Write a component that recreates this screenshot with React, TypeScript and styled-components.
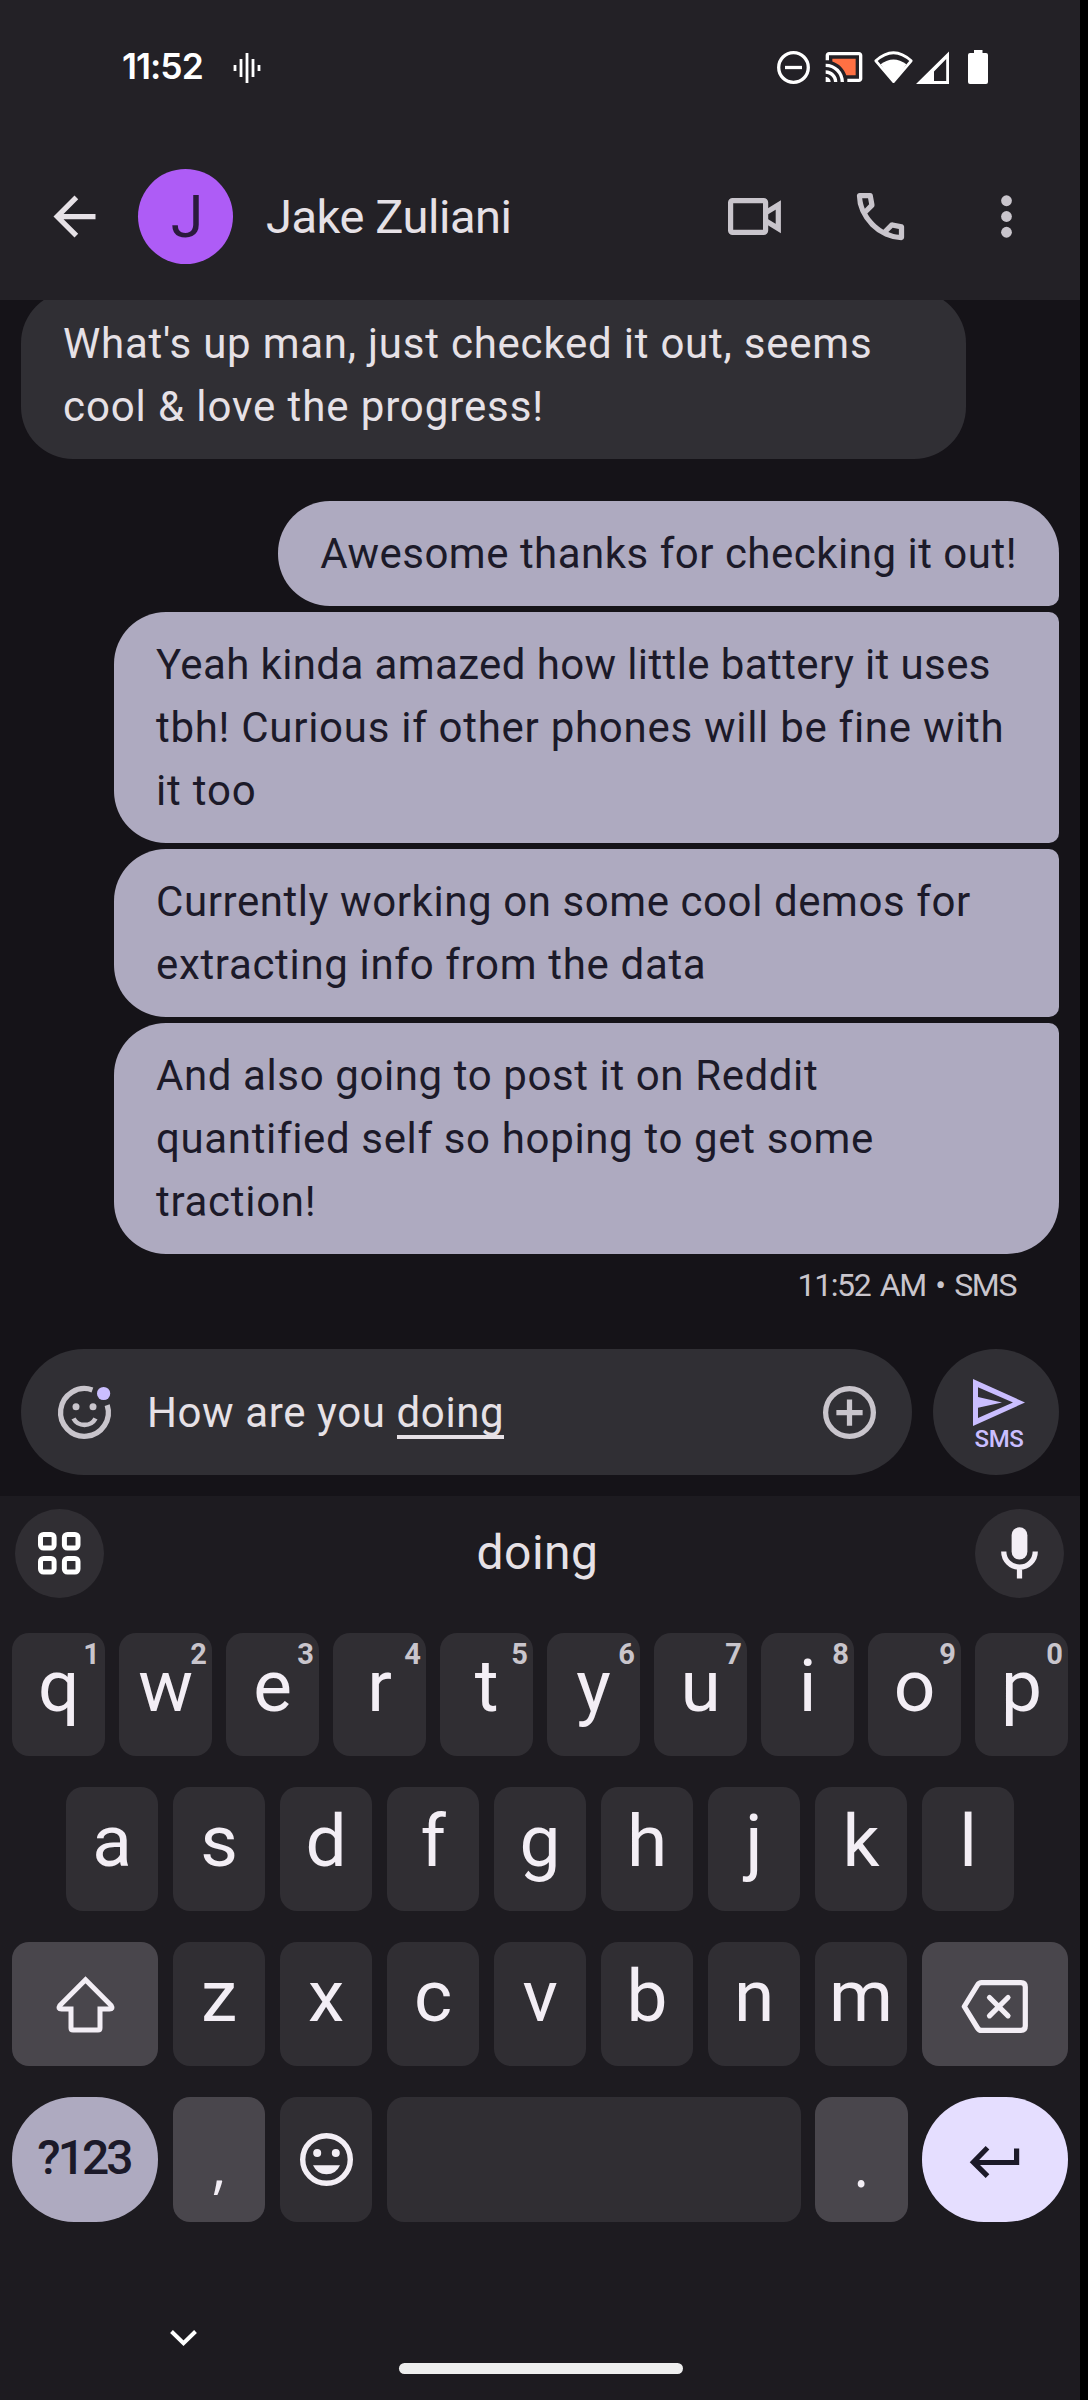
import React from "react";
import styled, { createGlobalStyle } from "styled-components";

const color = {
  header: "#232126",
  thread: "#151318",
  field: "#302f34",
  keyboard: "#1d1b20",
  key: "#302e33",
  actionKey: "#49464c",
  lavender: "#aeaac0",
  enter: "#e5deff",
  accent: "#cabeff",
  ink: "#1c1a29",
  text: "#e6e1e6",
  keyText: "#f3eef5",
  muted: "#c9c5cc",
  avatar: "#ae5cf6",
};

const GlobalStyle = createGlobalStyle`
  *, *::before, *::after { box-sizing: border-box; }
  body {
    margin: 0;
    background: #000;
    font-family: Roboto, "Liberation Sans", sans-serif;
  }
  svg { display: block; flex: none; overflow: visible; }
`;

const Phone = styled.main`
  width: 1080px;
  height: 2400px;
  display: flex;
  flex-direction: column;
  background: ${color.thread};
  overflow: hidden;
`;

/* ---------- header ---------- */

const Header = styled.header`
  height: 300px;
  flex: none;
  display: flex;
  flex-direction: column;
  background: ${color.header};
`;

const StatusBar = styled.div`
  height: 134px;
  display: flex;
  align-items: center;
  padding: 0 92px 0 122px;
  color: #fff;
`;

const Clock = styled.time`
  width: 111px;
  font: 600 35.5px/40px Inter, Roboto, sans-serif;
  letter-spacing: -1px;
`;

const StatusIcons = styled.div`
  margin-left: auto;
  display: flex;
  align-items: center;
`;

const AppBar = styled.div`
  height: 166px;
  display: flex;
  align-items: center;
  padding: 0 42px 1px 43px;
`;

const Avatar = styled.div`
  width: 95px;
  height: 95px;
  margin: 0 33px 0 32px;
  padding-left: 3px;
  border-radius: 50%;
  display: flex;
  align-items: center;
  justify-content: center;
  background: ${color.avatar};
  color: #2b1a3d;
  font-size: 59px;
  line-height: 95px;
`;

const ContactName = styled.h1`
  flex: 1;
  margin: 0;
  color: ${color.text};
  font-size: 47px;
  font-weight: 400;
  line-height: 64px;
  letter-spacing: -0.45px;
`;

const AppActions = styled.div`
  display: flex;
  align-items: center;
  gap: 63px;
  color: ${color.muted};
`;

/* ---------- thread ---------- */

const Thread = styled.section`
  height: 1049px;
  flex: none;
  display: flex;
  flex-direction: column;
  justify-content: flex-end;
  padding: 0 21px;
  overflow: hidden;
`;

const Bubble = styled.div<{ $from: "me" | "them"; $corner?: "first" | "middle" | "last" }>`
  flex: none;
  max-width: 945px;
  ${(p) => (p.$from === "them" ? "width: 945px;" : "")}
  ${(p) => (p.$corner === "middle" || p.$corner === "last" ? "width: 945px;" : "")}
  align-self: ${(p) => (p.$from === "me" ? "flex-end" : "flex-start")};
  margin-bottom: ${(p) => (p.$from === "them" ? 42 : p.$corner === "last" ? 0 : 6)}px;
  padding: 21px 42px;
  border-radius: ${(p) =>
    p.$from === "them"
      ? "52px"
      : p.$corner === "first"
      ? "52px 52px 10px 52px"
      : p.$corner === "middle"
      ? "52px 10px 10px 52px"
      : "52px 10px 52px 52px"};
  background: ${(p) => (p.$from === "me" ? color.lavender : color.field)};
  color: ${(p) => (p.$from === "me" ? color.ink : color.text)};
`;

const BubbleLine = styled.div<{ $tracking: number }>`
  font-size: 42px;
  line-height: 63px;
  white-space: nowrap;
  letter-spacing: ${(p) => p.$tracking}px;
`;

const Stamp = styled.div`
  height: 95px;
  flex: none;
  padding: 12px 43px 0 0;
  text-align: right;
  color: ${color.muted};
  font-size: 32px;
  line-height: 38px;
  letter-spacing: -1.4px;
  word-spacing: 3px;
`;

/* ---------- compose ---------- */

const Compose = styled.section`
  height: 147px;
  flex: none;
  display: flex;
  gap: 21px;
  padding: 0 21px 21px;
`;

const Field = styled.div`
  flex: 1;
  display: flex;
  align-items: center;
  padding: 0 31px 0 32px;
  border-radius: 63px;
  background: ${color.field};
  color: ${color.muted};
`;

const Draft = styled.div`
  flex: 1;
  padding-left: 31px;
  color: ${color.text};
  font-size: 42px;
  line-height: 63px;
  letter-spacing: 0.6px;
  white-space: pre;
`;

const Composing = styled.span`
  display: inline-block;
  height: 50px;
  line-height: 48px;
  border-bottom: 4px solid ${color.text};
`;

const SendButton = styled.button`
  width: 126px;
  height: 126px;
  border: 0;
  border-radius: 50%;
  padding: 30px 0 0 6px;
  display: flex;
  flex-direction: column;
  align-items: center;
  background: ${color.field};
  color: ${color.accent};
`;

const SendLabel = styled.span`
  padding-top: 1px;
  font: 500 24px/24px Roboto, sans-serif;
  letter-spacing: -0.3px;
`;

/* ---------- keyboard ---------- */

const Keyboard = styled.section`
  flex: 1;
  display: flex;
  flex-direction: column;
  background: ${color.keyboard};
`;

const Suggestions = styled.div`
  height: 137px;
  display: flex;
  justify-content: space-between;
  padding: 13px 16px 0 15px;
`;

const RoundButton = styled.button`
  width: 89px;
  height: 89px;
  border: 0;
  padding: 0;
  border-radius: 50%;
  display: flex;
  align-items: center;
  justify-content: center;
  background: ${color.key};
  color: ${color.keyText};
`;

const Suggestion = styled.span`
  margin-right: 4px;
  color: ${color.text};
  font-size: 48px;
  line-height: 87px;
  letter-spacing: 0.5px;
`;

const Rows = styled.div`
  display: flex;
  flex-direction: column;
  gap: 31px;
  padding: 0 12px 0 12.300px;
`;

const Row = styled.div<{ $inset?: number; $height?: number }>`
  display: flex;
  gap: 14.3px;
  height: ${(p) => p.$height ?? 124}px;
  padding: 0 ${(p) => p.$inset ?? 0}px;
`;

const Key = styled.button<{ $tone?: "action" | "lavender" | "enter"; $grow?: boolean; $wide?: boolean }>`
  position: relative;
  border: 0;
  margin: 0;
  padding: 0;
  width: ${(p) => (p.$wide ? 146.2 : 92.7)}px;
  flex: ${(p) => (p.$grow ? "1 1 0" : "none")};
  display: flex;
  align-items: center;
  justify-content: center;
  border-radius: ${(p) => (p.$tone === "lavender" || p.$tone === "enter" ? 62 : 17)}px;
  background: ${(p) => (p.$tone === "action" ? color.actionKey : p.$tone ? color[p.$tone] : color.key)};
  color: ${(p) => (p.$tone === "lavender" || p.$tone === "enter" ? color.ink : color.keyText)};
`;

const Letter = styled.span`
  font: 400 73px/86px Roboto, sans-serif;
  padding-bottom: 17px;
`;

const Hint = styled.span`
  position: absolute;
  top: 4px;
  right: 5px;
  color: ${color.muted};
  font: 700 29px/34px Roboto, sans-serif;
`;

const Symbols = styled.span`
  font: 500 48px/56px Roboto, sans-serif;
  letter-spacing: -3px;
  padding: 0 3px 4px 0;
`;

const Punctuation = styled.span`
  font: 400 58px/80px "Open Sans", "Noto Sans", sans-serif;
  padding-top: 10px;
`;

const NavBar = styled.div`
  margin-top: auto;
  height: 70px;
  display: flex;
  padding-left: 170px;
  color: #fff;
`;

const HomeHandle = styled.div`
  width: 284px;
  height: 11px;
  margin: 33px 0 0 201.5px;
  border-radius: 6px;
  background: #eeeeee;
`;

/* ---------- icons ---------- */

const M = 63;

const VoiceIcon = () => (
  <svg width="28" height="30" viewBox="0 0 28 30" stroke="#fff" strokeWidth="2.8">
    <path d="M2 12v6M8 6v18M14 0v30M20 6v18M26 12v6" />
  </svg>
);

const DndIcon = () => (
  <svg width="33" height="33" viewBox="0 0 33 33" fill="none" stroke="#fff" strokeWidth="3.3">
    <circle cx="16.5" cy="16.5" r="14.8" />
    <path d="M8 16.5h17" />
  </svg>
);

const CastIcon = () => (
  <svg width="40" height="40" viewBox="0 0 24 24">
    <path
      fill="#fff"
      d="M1 18v3h3c0-1.66-1.34-3-3-3zm0-4v2c2.76 0 5 2.24 5 5h2c0-3.87-3.13-7-7-7zM1 10v2a9 9 0 0 1 9 9h2c0-6.08-4.93-11-11-11zm20-7H3c-1.1 0-2 .9-2 2v3h2V5h18v14h-7v2h7c1.1 0 2-.9 2-2V5c0-1.1-.9-2-2-2z"
    />
    <path fill="#ff7043" d="M19 7H5v1.63c3.96 1.28 7.09 4.41 8.37 8.37H19z" />
  </svg>
);

const WifiIcon = () => (
  <svg width="39" height="33" viewBox="0 0 39 33">
    <path d="M1.8 9.8Q19.5 -6.4 37.2 9.8L19.5 30.6Z" fill="none" stroke="#fff" strokeWidth="2.8" strokeLinejoin="round" />
    <path d="M6.6 13.2Q19.5 3.8 32.4 13.2L19.5 32Z" fill="#fff" />
  </svg>
);

const SignalIcon = () => (
  <svg width="33" height="33" viewBox="0 0 33 33">
    <path fill="#fff" fillRule="evenodd" d="M33 .5V33H0ZM30.2 8V30H18V20.5Z" />
  </svg>
);

const BatteryIcon = () => (
  <svg width="20" height="34" viewBox="0 0 20 34" fill="#fff">
    <path d="M6 0h8.5v3H18q2 0 2 2v27q0 2-2 2H2q-2 0-2-2V5q0-2 2-2h4z" />
  </svg>
);

const BackIcon = () => (
  <svg width={M} height={M} viewBox="0 0 24 24" fill={color.text}>
    <path d="M20 11H7.83l5.59-5.59L12 4l-8 8 8 8 1.41-1.41L7.83 13H20z" />
  </svg>
);

const VideoIcon = () => (
  <svg width="53" height="37" viewBox="0 0 53 37" fill="none" stroke="currentColor" strokeWidth="5.2" strokeLinejoin="round">
    <rect x="2.6" y="2.6" width="35" height="31.8" rx="2" />
    <path d="M38 14.5L50.3 7V30.5L38 23" strokeLinejoin="miter" />
  </svg>
);

const PhoneIcon = () => (
  <svg width={M} height={M} viewBox="0 0 24 24" fill="currentColor">
    <path d="M19.95 21q-3.125 0-6.175-1.362-3.05-1.363-5.55-3.863T4.362 10.225Q3 7.175 3 4.05q0-.45.3-.75t.75-.3H8.1q.35 0 .625.237.275.238.325.563l.65 3.5q.05.4-.025.675-.075.275-.275.475L6.975 10.9q.5.925 1.187 1.787.688.863 1.513 1.663.775.775 1.625 1.438.85.662 1.8 1.212l2.35-2.35q.225-.225.588-.338.362-.112.712-.062l3.45.7q.35.1.575.362.225.263.225.588v4.05q0 .45-.3.75t-.75.3ZM6.025 9l1.65-1.65L7.25 5H5.025q.125 1.025.35 2.025Q5.6 8.025 6.025 9Zm8.95 8.95q.975.425 1.988.675Q17.975 18.875 19 18.95v-2.2l-2.35-.475Z" />
  </svg>
);

const MoreIcon = () => (
  <svg width={M} height={M} viewBox="0 0 24 24" fill="currentColor">
    <circle cx="12" cy="6" r="2.05" />
    <circle cx="12" cy="12" r="2.05" />
    <circle cx="12" cy="18" r="2.05" />
  </svg>
);

const StickerIcon = () => (
  <svg width={M} height={M} viewBox="0 0 63 63" fill="none">
    <path d="M39.4 8.9A23.9 23.9 0 1 0 54.2 24.1" stroke="currentColor" strokeWidth="5.3" />
    <circle cx="23" cy="25.7" r="3.5" fill="currentColor" />
    <circle cx="40" cy="25.7" r="3.5" fill="currentColor" />
    <path d="M20.5 37.5Q24 43.9 31.5 43.9T42.5 37.5" stroke="currentColor" strokeWidth="4.6" />
    <circle cx="50.6" cy="12.5" r="6.6" fill={color.accent} />
  </svg>
);

const AddIcon = () => (
  <svg width={M} height={M} viewBox="0 0 24 24" fill="none" stroke="currentColor" strokeWidth="2">
    <circle cx="12" cy="12" r="9.1" />
    <path d="M12 7v10M7 12h10" />
  </svg>
);

const SendIcon = () => (
  <svg width="52" height="47" viewBox="0 0 52 47" fill="currentColor">
    <path fillRule="evenodd" d="M0 0L52 23.5L0 47ZM5 8.3V18L29 23.5L5 28.8V39L40 23.5Z" />
  </svg>
);

const GridIcon = () => (
  <svg width="43" height="43" viewBox="0 0 43 43" fill="none" stroke="#fff" strokeWidth="5">
    <rect x="2.5" y="2.5" width="13.6" height="13.6" rx="3" />
    <rect x="26.4" y="2.5" width="13.6" height="13.6" rx="3" />
    <rect x="2.5" y="26.4" width="13.6" height="13.6" rx="3" />
    <rect x="26.4" y="26.4" width="13.6" height="13.6" rx="3" />
  </svg>
);

const MicIcon = () => (
  <svg width={M} height={M} viewBox="0 0 24 24">
    <rect x="9" y="2" width="6" height="12.3" rx="3" fill="currentColor" />
    <path d="M6 11.2a6 6 0 0 0 12 0M12 17v4.5" fill="none" stroke="currentColor" strokeWidth="2" />
  </svg>
);

const ShiftIcon = () => (
  <svg width="59" height="57" viewBox="0 0 59 57" fill="none" stroke="currentColor" strokeWidth="5" strokeLinejoin="miter">
    <path d="M29.5 3.7L55.2 29.5Q57.5 33 53.5 33H44V52Q44 54 42 54H17Q15 54 15 52V33H5.5Q1.5 33 3.8 29.5Z" />
  </svg>
);

const BackspaceIcon = () => (
  <svg width="67" height="53" viewBox="0 0 67 53" fill="none" stroke="currentColor" strokeWidth="5.2" strokeLinejoin="round">
    <path d="M3.3 26.5L16.5 5Q18 2.6 20.5 2.6H60Q64.3 2.6 64.3 7V46Q64.3 50.4 60 50.4H20.5Q18 50.4 16.5 48Z" />
    <path d="M28.5 17.5L47 35.8M47 17.5L28.5 35.8" strokeLinecap="round" />
  </svg>
);

const EmojiIcon = () => (
  <svg width="53" height="53" viewBox="0 0 53 53" fill="none">
    <circle cx="26.5" cy="26.5" r="23.8" stroke="currentColor" strokeWidth="5.4" />
    <circle cx="17.2" cy="20" r="4" fill="currentColor" />
    <circle cx="35.8" cy="20" r="4" fill="currentColor" />
    <path d="M13 32.3H40Q36 41.3 26.5 41.3T13 32.3Z" fill="currentColor" />
  </svg>
);

const EnterIcon = () => (
  <svg width="50" height="32" viewBox="0 0 50 32" fill="none" stroke="currentColor" strokeWidth="5.2">
    <path d="M46.6 2.5V16.5H4M17.5 1.8L3.4 16.2L17.5 30.2" />
  </svg>
);

const ChevronIcon = () => (
  <svg width="27" height="16" viewBox="0 0 27 16" fill="none" stroke="currentColor" strokeWidth="4">
    <path d="M1.5 1.5L13.5 13.2L25.5 1.5" />
  </svg>
);

/* ---------- spacing helper for icons ---------- */

const IconSlot = styled.span<{ $l?: number; $r?: number; $t?: number }>`
  display: flex;
  margin-left: ${(p) => p.$l ?? 0}px;
  margin-right: ${(p) => p.$r ?? 0}px;
  margin-top: ${(p) => p.$t ?? 0}px;
`;

/* ---------- data ---------- */

type Line = [text: string, tracking: number];

const incoming: Line[] = [
  ["What's up man, just checked it out, seems", 0.77],
  ["cool & love the progress!", 0.9],
];

const outgoing: { corner: "first" | "middle" | "last"; lines: Line[] }[] = [
  { corner: "first", lines: [["Awesome thanks for checking it out!", 0.5]] },
  {
    corner: "middle",
    lines: [
      ["Yeah kinda amazed how little battery it uses", 0.39],
      ["tbh! Curious if other phones will be fine with", 0.72],
      ["it too", 0.8],
    ],
  },
  {
    corner: "middle",
    lines: [
      ["Currently working on some cool demos for", 0.58],
      ["extracting info from the data", 0.67],
    ],
  },
  {
    corner: "last",
    lines: [
      ["And also going to post it on Reddit", 0.6],
      ["quantified self so hoping to get some", 0.65],
      ["traction!", 0.7],
    ],
  },
];

const renderLines = (lines: Line[]) =>
  lines.map(([text, tracking]) => (
    <BubbleLine key={text} $tracking={tracking}>
      {text}
    </BubbleLine>
  ));

const letters = (row: string) =>
  row.split("").map((c) => (
    <Key key={c}>
      <Letter>{c}</Letter>
    </Key>
  ));

export default function App() {
  return (
    <>
      <GlobalStyle />
      <Phone>
        <Header>
          <StatusBar>
            <Clock>11:52</Clock>
            <IconSlot $t={2}>
              <VoiceIcon />
            </IconSlot>
            <StatusIcons>
              <DndIcon />
              <IconSlot $l={14}>
                <CastIcon />
              </IconSlot>
              <IconSlot $l={9.5}>
                <WifiIcon />
              </IconSlot>
              <IconSlot $l={3.5}>
                <SignalIcon />
              </IconSlot>
              <IconSlot $l={19}>
                <BatteryIcon />
              </IconSlot>
            </StatusIcons>
          </StatusBar>
          <AppBar>
            <BackIcon />
            <Avatar>J</Avatar>
            <ContactName>Jake Zuliani</ContactName>
            <AppActions>
              <IconSlot $r={5}>
                <VideoIcon />
              </IconSlot>
              <PhoneIcon />
              <MoreIcon />
            </AppActions>
          </AppBar>
        </Header>

        <Thread>
          <Bubble $from="them">{renderLines(incoming)}</Bubble>
          {outgoing.map((b) => (
            <Bubble key={b.lines[0][0]} $from="me" $corner={b.corner}>
              {renderLines(b.lines)}
            </Bubble>
          ))}
          <Stamp>11:52 AM • SMS</Stamp>
        </Thread>

        <Compose>
          <Field>
            <StickerIcon />
            <Draft>
              How are you <Composing>doing</Composing>
            </Draft>
            <AddIcon />
          </Field>
          <SendButton>
            <SendIcon />
            <SendLabel>SMS</SendLabel>
          </SendButton>
        </Compose>

        <Keyboard>
          <Suggestions>
            <RoundButton>
              <GridIcon />
            </RoundButton>
            <Suggestion>doing</Suggestion>
            <RoundButton>
              <MicIcon />
            </RoundButton>
          </Suggestions>
          <Rows>
            <Row $height={123}>
              {"qwertyuiop".split("").map((c, i) => (
                <Key key={c}>
                  <Letter>{c}</Letter>
                  <Hint>{(i + 1) % 10}</Hint>
                </Key>
              ))}
            </Row>
            <Row $inset={53.5}>{letters("asdfghjkl")}</Row>
            <Row>
              <Key $tone="action" $wide>
                <ShiftIcon />
              </Key>
              {letters("zxcvbnm")}
              <Key $tone="action" $wide>
                <IconSlot $t={4}>
                  <BackspaceIcon />
                </IconSlot>
              </Key>
            </Row>
            <Row $height={125}>
              <Key $tone="lavender" $wide>
                <Symbols>?123</Symbols>
              </Key>
              <Key $tone="action">
                <Punctuation>,</Punctuation>
              </Key>
              <Key>
                <EmojiIcon />
              </Key>
              <Key $grow aria-label="space" />
              <Key $tone="action">
                <Punctuation>.</Punctuation>
              </Key>
              <Key $tone="enter" $wide>
                <IconSlot $t={4}>
                  <EnterIcon />
                </IconSlot>
              </Key>
            </Row>
          </Rows>
          <NavBar>
            <ChevronIcon />
            <HomeHandle />
          </NavBar>
        </Keyboard>
      </Phone>
    </>
  );
}
